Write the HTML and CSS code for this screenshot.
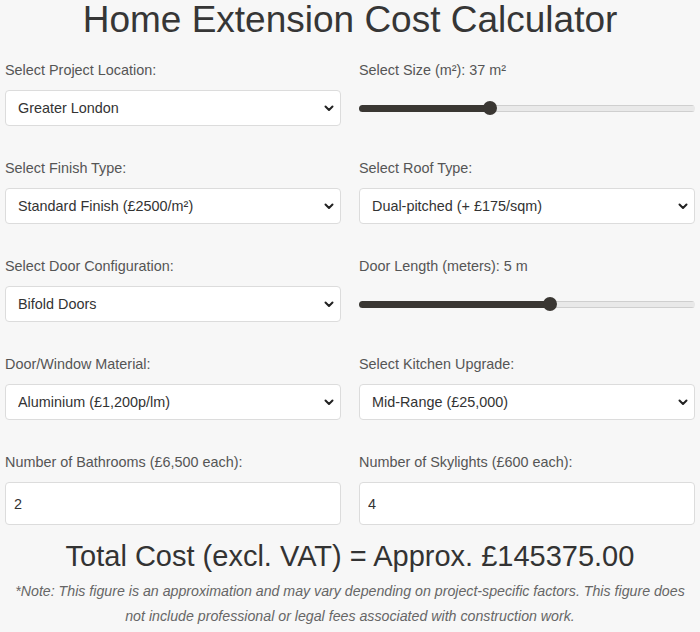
FILE: index.html
```html
<!DOCTYPE html>
<html lang="en">
<head>
<meta charset="utf-8">
<title>Home Extension Cost Calculator</title>
<link rel="stylesheet" href="styles.css">
</head>
<body>
<main class="calculator">
  <h1 class="title">Home Extension Cost Calculator</h1>
  <form class="grid">
    <div class="field">
      <label class="label" for="location">Select Project Location:</label>
      <select id="location" class="control select">
        <option>Greater London</option>
      </select>
    </div>
    <div class="field">
      <label class="label" for="size">Select Size (m²): 37 m²</label>
      <div class="range-wrap">
        <input id="size" class="range" type="range" min="10" max="80" value="37" style="--f:0.3857">
      </div>
    </div>
    <div class="field">
      <label class="label" for="finish">Select Finish Type:</label>
      <select id="finish" class="control select">
        <option>Standard Finish (£2500/m²)</option>
      </select>
    </div>
    <div class="field">
      <label class="label" for="roof">Select Roof Type:</label>
      <select id="roof" class="control select">
        <option>Dual-pitched (+ £175/sqm)</option>
      </select>
    </div>
    <div class="field">
      <label class="label" for="door">Select Door Configuration:</label>
      <select id="door" class="control select">
        <option>Bifold Doors</option>
      </select>
    </div>
    <div class="field">
      <label class="label" for="doorlen">Door Length (meters): 5 m</label>
      <div class="range-wrap">
        <input id="doorlen" class="range" type="range" min="1" max="8" value="5" style="--f:0.5714">
      </div>
    </div>
    <div class="field">
      <label class="label" for="material">Door/Window Material:</label>
      <select id="material" class="control select">
        <option>Aluminium (£1,200p/lm)</option>
      </select>
    </div>
    <div class="field">
      <label class="label" for="kitchen">Select Kitchen Upgrade:</label>
      <select id="kitchen" class="control select">
        <option>Mid-Range (£25,000)</option>
      </select>
    </div>
    <div class="field">
      <label class="label" for="bath">Number of Bathrooms (£6,500 each):</label>
      <input id="bath" class="control number" type="text" value="2">
    </div>
    <div class="field">
      <label class="label" for="sky">Number of Skylights (£600 each):</label>
      <input id="sky" class="control number" type="text" value="4">
    </div>
  </form>
  <h2 class="total">Total Cost (excl. VAT) = Approx. £145375.00</h2>
  <p class="note">*Note: This figure is an approximation and may vary depending on project-specific factors. This figure does not include professional or legal fees associated with construction work.</p>
</main>
</body>
</html>
```

FILE: styles.css
```css
* { box-sizing: border-box; }

html, body {
  margin: 0;
  padding: 0;
  background: #f7f7f7;
}

body {
  font-family: "Liberation Sans", Arial, Helvetica, sans-serif;
  color: #333;
}

.calculator {
  padding: 0 5px;
}

.title {
  margin: 0;
  font-size: 37px;
  line-height: 40px;
  font-weight: normal;
  text-align: center;
  color: #363636;
  height: 60px;
}

.grid {
  display: grid;
  grid-template-columns: 1fr 1fr;
  column-gap: 18px;
  row-gap: 32px;
  margin: 0;
}

.field {
  display: flex;
  flex-direction: column;
}

.label {
  font-size: 14.4px;
  line-height: 20px;
  color: #555;
  margin-bottom: 10px;
}

.control {
  font-family: inherit;
  font-size: 14.4px;
  color: #333;
  background-color: #fff;
  border: 1px solid #dcdcdc;
  border-radius: 4px;
  width: 100%;
  margin: 0;
}

.select {
  height: 36px;
  padding: 0 30px 0 12px;
  -webkit-appearance: none;
  appearance: none;
  background-image: url("data:image/svg+xml,%3Csvg xmlns='http://www.w3.org/2000/svg' width='10' height='7' viewBox='0 0 10 7'%3E%3Cpath d='M1.5 1.5 L5 5 L8.5 1.5' fill='none' stroke='%23222' stroke-width='2' stroke-linecap='round' stroke-linejoin='round'/%3E%3C/svg%3E");
  background-repeat: no-repeat;
  background-position: right 6px center;
  background-size: 10px 7px;
}

.number {
  height: 43px;
  padding: 0 8px;
}

.range-wrap {
  height: 36px;
  display: flex;
  align-items: center;
}

.range {
  -webkit-appearance: none;
  appearance: none;
  width: 100%;
  height: 14px;
  margin: 0;
  background: transparent;
}

.range::-webkit-slider-runnable-track {
  height: 7px;
  border-radius: 4px;
  background:
    linear-gradient(#3a3733, #3a3733) 0 0 / calc(7px + (100% - 14px) * var(--f)) 100% no-repeat,
    linear-gradient(#e9e9e9, #e9e9e9) 0 50% / 100% 5px no-repeat,
    linear-gradient(#cfcfcf, #cfcfcf) 0 0 / 100% 100% no-repeat;
}

.range::-webkit-slider-thumb {
  -webkit-appearance: none;
  appearance: none;
  width: 14px;
  height: 14px;
  border-radius: 50%;
  background: #3a3733;
  border: none;
  margin-top: -3.5px;
}

.total {
  margin: 15px 0 0;
  font-size: 29px;
  line-height: 32px;
  font-weight: normal;
  text-align: center;
  color: #333;
}

.note {
  margin: 7px 0 0;
  font-size: 14.2px;
  line-height: 25px;
  font-style: italic;
  text-align: center;
  color: #666;
}
```
